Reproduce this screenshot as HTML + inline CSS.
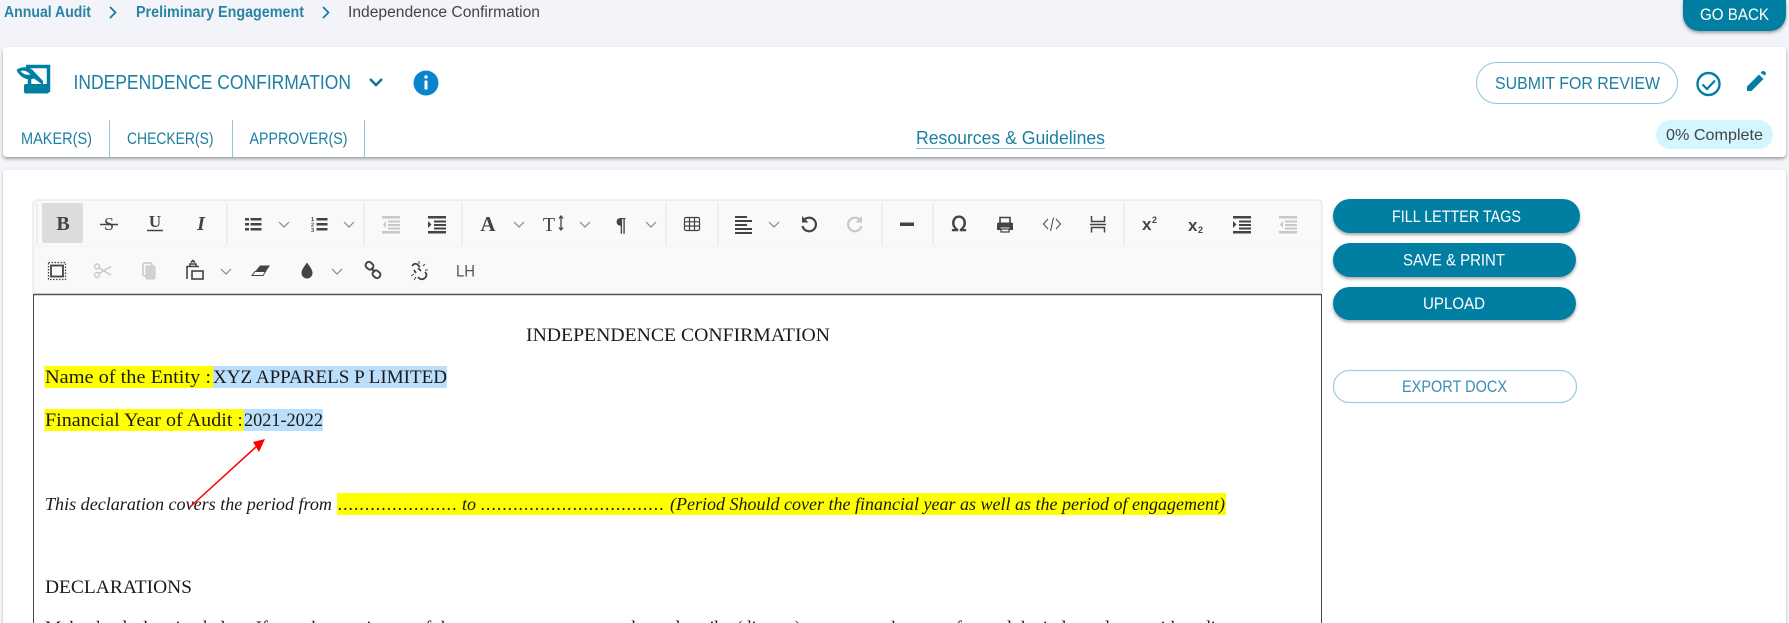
<!DOCTYPE html>
<html lang="en">
<head>
<meta charset="utf-8">
<title>Independence Confirmation</title>
<style>
html,body{margin:0;padding:0;width:1789px;height:623px;overflow:hidden;background:#f3f4f9}
svg{position:absolute;left:0;top:0;display:block}
.os{font-family:"Liberation Sans",sans-serif}
.pf{font-family:"Liberation Serif",serif;fill:#1a1a1a}
.tl{fill:#1c7fa0}
</style>
</head>
<body>
<svg width="1789" height="623" viewBox="0 0 1789 623" xmlns="http://www.w3.org/2000/svg">
<defs>
<filter id="s1" x="-5%" y="-20%" width="110%" height="150%"><feDropShadow dx="0" dy="2" stdDeviation="1.5" flood-color="#000" flood-opacity=".35"/></filter>
<filter id="s2" x="-5%" y="-5%" width="110%" height="110%"><feDropShadow dx="0" dy="1" stdDeviation="1" flood-color="#000" flood-opacity=".3"/></filter>
</defs>
<rect width="1789" height="623" fill="#f3f4f9"/>

<!-- breadcrumb -->
<g class="os" font-size="15.5">
<text x="4" y="17" textLength="87" lengthAdjust="spacingAndGlyphs" fill="#14789a" font-weight="bold" opacity=".9">Annual Audit</text>
<path d="M110 7l5.500 5.500-5.500 5.500" fill="none" stroke="#14789a" stroke-width="1.700"/>
<text x="136" y="17" textLength="168" lengthAdjust="spacingAndGlyphs" fill="#14789a" font-weight="bold" opacity=".9">Preliminary Engagement</text>
<path d="M323 7l5.500 5.500-5.500 5.500" fill="none" stroke="#14789a" stroke-width="1.700"/>
<text x="348" y="17" textLength="192" lengthAdjust="spacingAndGlyphs" fill="#444">Independence Confirmation</text>
</g>

<!-- go back -->
<path d="M1683 0H1786V15a16 16 0 0 1-16 16H1699a16 16 0 0 1-16-16Z" fill="#007fa3" filter="url(#s1)"/>
<text class="os" x="1700" y="20" font-size="17" textLength="69" lengthAdjust="spacingAndGlyphs" fill="#fff">GO BACK</text>

<!-- header card -->
<rect x="3" y="47" width="1783" height="110" rx="4" fill="#fff" filter="url(#s1)"/>
<!-- logo -->
<path d="M26 66.500H48.500V92" fill="none" stroke="#007fa3" stroke-width="3.500"/>
<path d="M16.500 70C22 65.500 31 67 34 71.500L43 81V85L34 78.500C28 81 20 78 16.500 70Z" fill="#007fa3"/>
<path d="M20.500 71C24 70 27 71 30.500 74.500C26 75.500 23 74 20.500 71Z" fill="#fff"/>
<path d="M29.500 78V85" stroke="#007fa3" stroke-width="3.500"/>
<rect x="24" y="84" width="25" height="9.500" rx="2" fill="#007fa3"/>
<text class="os tl" x="73.500" y="89" font-size="20" textLength="277.500" lengthAdjust="spacingAndGlyphs">INDEPENDENCE CONFIRMATION</text>
<path d="M370 79l6 6 6-6" fill="none" stroke="#0f7496" stroke-width="2.400"/>
<circle cx="426" cy="83" r="12.500" fill="#0a84cc"/>
<circle cx="426" cy="77" r="1.700" fill="#fff"/>
<rect x="424.500" y="80.500" width="3" height="9" rx=".6" fill="#fff"/>

<!-- tabs -->
<g class="os tl" font-size="16.500">
<text x="21" y="144" textLength="71" lengthAdjust="spacingAndGlyphs">MAKER(S)</text>
<text x="127" y="144" textLength="86.500" lengthAdjust="spacingAndGlyphs">CHECKER(S)</text>
<text x="249.500" y="144" textLength="98" lengthAdjust="spacingAndGlyphs">APPROVER(S)</text>
</g>
<path d="M109.500 120V157M232.500 120V157M364.500 120V157" stroke="#8ec5d8" stroke-width="1"/>
<text class="os tl" x="916" y="144" font-size="18" textLength="189" lengthAdjust="spacingAndGlyphs">Resources &amp; Guidelines</text>
<path d="M916 148.500H1105" stroke="#8ec5d8" stroke-width="1"/>

<!-- submit etc -->
<rect x="1476.500" y="62.500" width="201" height="41" rx="20.500" fill="#fff" stroke="#8ec5d8"/>
<text class="os tl" x="1495" y="89" font-size="17.500" textLength="165" lengthAdjust="spacingAndGlyphs">SUBMIT FOR REVIEW</text>
<circle cx="1708.500" cy="84" r="11" fill="none" stroke="#007fa3" stroke-width="2.400"/>
<path d="M1702.500 84.500l4.500 4.500 8-8.500" fill="none" stroke="#007fa3" stroke-width="2.200"/>
<path d="M1747 91V86.500L1759 74.500L1763.500 79L1751.500 91ZM1760.500 73L1762.500 71Q1763.500 70.500 1764.500 71.500L1765.500 72.500Q1766.500 73.500 1765.500 74.500L1765 75.500Z" fill="#007fa3"/>
<rect x="1656" y="120" width="117" height="29" rx="14.500" fill="#d4f6ff"/>
<text class="os" x="1666" y="140" font-size="16" textLength="97" lengthAdjust="spacingAndGlyphs" fill="#444">0% Complete</text>

<!-- main card -->
<rect x="3" y="170" width="1783" height="470" rx="4" fill="#fff" filter="url(#s2)"/>

<!-- toolbar -->
<rect x="33" y="200" width="1289" height="94" rx="4" fill="#f9f9f9" stroke="#e3e3e3"/>
<path d="M34 246H1321" stroke="#f3f3f3"/>
<rect x="42" y="203" width="41" height="40" rx="2" fill="#dcdcdc"/>
<path d="M227 203V245M364 203V245M462 203V245M666 203V245M718 203V245M882 203V245M933 203V245M1124 203V245M37 203V245" stroke="#e3e3e3" stroke-width="1"/>

<g font-family="Liberation Serif,serif" fill="#444" text-anchor="middle">
<text x="63" y="230" font-size="20" font-weight="bold">B</text>
<text x="109" y="230" font-size="18">S</text>
<text x="155" y="227" font-size="17" font-weight="bold">U</text>
<text x="201" y="230" font-size="20" font-style="italic" font-weight="bold">I</text>
<text x="488" y="231" font-size="21" font-weight="bold">A</text>
<text x="549" y="231" font-size="20">T</text>
<text x="621" y="231" font-size="20" font-weight="bold">¶</text>
</g>
<path d="M100 224.500H118M147 230.500H163" stroke="#444" stroke-width="1.500"/>
<path d="M561 216V230M559 218.500l2-2.500 2 2.500M559 227.500l2 2.500 2-2.500" fill="none" stroke="#444" stroke-width="1.300"/>

<!-- chevrons -->
<path d="M279 222l5 5 5-5M344 222l5 5 5-5M514 222l5 5 5-5M580 222l5 5 5-5M646 222l5 5 5-5M769 222l5 5 5-5M221 269l5 5 5-5M332 269l5 5 5-5" fill="none" stroke="#888" stroke-width="1.200"/>

<!-- ul -->
<g fill="#444">
<rect x="245" y="218" width="4" height="2.500"/><rect x="245" y="223" width="4" height="2.500"/><rect x="245" y="228" width="4" height="2.500"/>
<rect x="250.500" y="218" width="11" height="2.500"/><rect x="250.500" y="223" width="11" height="2.500"/><rect x="250.500" y="228" width="11" height="2.500"/>
<rect x="316.500" y="218" width="11" height="2.500"/><rect x="316.500" y="223" width="11" height="2.500"/><rect x="316.500" y="228" width="11" height="2.500"/>
<text x="311" y="221" font-size="5.500" font-family="Liberation Sans,sans-serif" font-weight="bold">1</text>
<text x="311" y="226.500" font-size="5.500" font-family="Liberation Sans,sans-serif" font-weight="bold">2</text>
<text x="311" y="232" font-size="5.500" font-family="Liberation Sans,sans-serif" font-weight="bold">3</text>
</g>

<!-- outdent / indent -->
<g fill="#c8c8c8"><rect x="382" y="216" width="18" height="2.500"/><rect x="388" y="220.500" width="12" height="2"/><rect x="388" y="224" width="12" height="2"/><rect x="388" y="227.500" width="12" height="2"/><rect x="382" y="231" width="18" height="2.500"/><path d="M386 221v7l-3-3.500Z"/></g>
<g fill="#444"><rect x="428" y="216" width="18" height="2.500"/><rect x="434" y="220.500" width="12" height="2"/><rect x="434" y="224" width="12" height="2"/><rect x="434" y="227.500" width="12" height="2"/><rect x="428" y="231" width="18" height="2.500"/><path d="M428 221v7l3.500-3.500Z"/></g>
<g fill="#444"><rect x="1233" y="216" width="18" height="2.500"/><rect x="1239" y="220.500" width="12" height="2"/><rect x="1239" y="224" width="12" height="2"/><rect x="1239" y="227.500" width="12" height="2"/><rect x="1233" y="231" width="18" height="2.500"/><path d="M1233 221v7l3.500-3.500Z"/></g>
<g fill="#c8c8c8"><rect x="1279" y="216" width="18" height="2.500"/><rect x="1285" y="220.500" width="12" height="2"/><rect x="1285" y="224" width="12" height="2"/><rect x="1285" y="227.500" width="12" height="2"/><rect x="1279" y="231" width="18" height="2.500"/><path d="M1283 221v7l-3-3.500Z"/></g>

<!-- table -->
<g fill="none" stroke="#444" stroke-width="1.200"><rect x="684.500" y="217.500" width="15" height="13" rx="1.500"/><path d="M684.500 221.800H699.500M684.500 226H699.500M689.500 218V230M694.500 218V230"/></g>
<!-- align -->
<g fill="#444"><rect x="735" y="216" width="12" height="2"/><rect x="735" y="220" width="17" height="2"/><rect x="735" y="224" width="12" height="2"/><rect x="735" y="228" width="17" height="2"/><rect x="735" y="232" width="17" height="2"/></g>
<!-- undo/redo -->
<path d="M804.500 219.500A6.800 6.800 0 1 1 802.500 226" fill="none" stroke="#444" stroke-width="2.200"/>
<path d="M802 216v6.500h6.500Z" fill="#444"/>
<path d="M859.500 219.500A6.800 6.800 0 1 0 861.500 226" fill="none" stroke="#c8c8c8" stroke-width="2.200"/>
<path d="M862 216v6.500h-6.500Z" fill="#c8c8c8"/>
<!-- hr -->
<rect x="900" y="222.500" width="14" height="3.500" fill="#444"/>
<!-- omega -->
<text x="959" y="231" font-size="20" font-weight="normal" text-anchor="middle" font-family="DejaVu Sans,sans-serif" fill="#444" stroke="#444" stroke-width=".5">Ω</text>
<!-- print -->
<path d="M1000 223V217.500H1010V223" fill="none" stroke="#444" stroke-width="1.600"/>
<path d="M997 224Q997 222.500 999 222.500H1011Q1013 222.500 1013 224V230H1009.500V227.500H1000.500V230H997Z" fill="#444"/>
<path d="M1001 229H1009V232H1001Z" fill="none" stroke="#444" stroke-width="1.300"/>
<!-- code -->
<path d="M1048 219l-4.500 5 4.500 5M1056 219l4.500 5-4.500 5M1053.500 217.500L1050.500 231" fill="none" stroke="#444" stroke-width="1"/>
<!-- page break -->
<path d="M1091.500 216V221.500H1104.500V216M1091.500 232.500V227.500H1104.500V232.500M1090 224.500H1106" fill="none" stroke="#444" stroke-width="1.500"/>
<!-- sup sub -->
<g fill="#444" font-family="Liberation Sans,sans-serif" font-weight="bold">
<text x="1142" y="230" font-size="17">x</text><text x="1152" y="223" font-size="9">2</text>
<text x="1188" y="231" font-size="17">x</text><text x="1198" y="233" font-size="9">2</text>
</g>

<!-- row 2 -->
<rect x="51" y="265.500" width="12" height="11" fill="none" stroke="#444" stroke-width="1.800"/>
<rect x="48.500" y="262.500" width="17" height="17" fill="none" stroke="#444" stroke-width="1.300" stroke-dasharray="1.500 1.500"/>
<g fill="none" stroke="#c8c8c8" stroke-width="1.400"><circle cx="97" cy="266.500" r="2.500"/><circle cx="97" cy="275" r="2.500"/><path d="M99 268L111 275M99 273.500L111 266.500"/></g>
<g fill="none" stroke="#c8c8c8" stroke-width="1.500"><rect x="143" y="263" width="9" height="13" rx="1.500"/></g>
<rect x="146" y="266" width="9" height="13" rx="1.500" fill="#d2d2d2" stroke="#c8c8c8"/>
<g fill="none" stroke="#444" stroke-width="1.600"><path d="M187 279V266.500H199M190 266.500V264H196V266.500"/><rect x="192" y="271" width="11" height="8"/><path d="M191 262.500L193 260.500L195 262.500"/></g>
<path d="M252 275.500L260 265.500H270L263 275.500Z" fill="#444"/>
<path d="M252 275.500L255 271.500H265.500L263 275.500Z" fill="#f9f9f9" stroke="#444"/>
<path d="M307 262.500C310 267 312.500 269.500 312.500 273A5.300 5.300 0 0 1 301.500 273C301.500 269.500 304 267 307 262.500Z" fill="#444"/>
<g fill="none" stroke="#444" stroke-width="2"><rect x="365.500" y="262.500" width="8" height="6.500" rx="3" transform="rotate(40 369.500 265.700)"/><rect x="372.500" y="271" width="8" height="6.500" rx="3" transform="rotate(40 376.500 274.200)"/><path d="M371 268L375 272"/></g>
<g fill="none" stroke="#444" stroke-width="1.800"><path d="M412 266Q415 262 418 265L420 267M425 272Q428 275 425 278Q421 281 418 277M414 270L416 273M418 268L421 271"/></g>
<path d="M419 261V264M425 264L423 266M428 270H425M411 276L414 274M414 280L416 277" stroke="#444" stroke-width="1" fill="none"/>
<text class="os" x="456" y="276.500" font-size="17" fill="#555" textLength="19" lengthAdjust="spacingAndGlyphs">LH</text>

<!-- editor -->
<rect x="33.500" y="294.500" width="1288" height="340" fill="#fff" stroke="#444" stroke-width="1"/>
<path d="M33.500 294.500H1321.500" stroke="#555" stroke-width="1.500"/>

<!-- highlights -->
<rect x="44.500" y="366" width="168.500" height="22" fill="#ffff00"/>
<rect x="213" y="366" width="234" height="22" fill="#bbdefb"/>
<rect x="44.500" y="409" width="199" height="22" fill="#ffff00"/>
<rect x="243.500" y="409" width="79.500" height="22" fill="#bbdefb"/>
<rect x="337" y="493" width="889" height="22" fill="#ffff00"/>

<!-- doc text -->
<g class="pf" font-size="18.500">
<text x="526" y="341" textLength="304" lengthAdjust="spacingAndGlyphs">INDEPENDENCE CONFIRMATION</text>
<text x="45" y="383" textLength="166" lengthAdjust="spacingAndGlyphs">Name of the Entity :</text>
<text x="213" y="383" textLength="234" lengthAdjust="spacingAndGlyphs">XYZ APPARELS P LIMITED</text>
<text x="45" y="426" textLength="198" lengthAdjust="spacingAndGlyphs">Financial Year of Audit :</text>
<text x="244" y="426" textLength="79" lengthAdjust="spacingAndGlyphs">2021-2022</text>
<text x="45" y="510" font-style="italic" font-size="18" textLength="287" lengthAdjust="spacingAndGlyphs">This declaration covers the period from</text>
<text x="338" y="510" font-style="italic" font-size="18" textLength="119" lengthAdjust="spacing">...................... </text>
<text x="462" y="510" font-style="italic" font-size="18" textLength="14" lengthAdjust="spacingAndGlyphs">to</text>
<text x="481" y="510" font-style="italic" font-size="18" textLength="183" lengthAdjust="spacing">..................................</text>
<text x="670" y="510" font-style="italic" font-size="18" textLength="555" lengthAdjust="spacingAndGlyphs">(Period Should cover the financial year as well as the period of engagement)</text>
<text x="45" y="593" textLength="147" lengthAdjust="spacingAndGlyphs">DECLARATIONS</text>
<text x="45" y="634" font-size="19" textLength="1232" lengthAdjust="spacingAndGlyphs">Make the declaration below. If any changes in any of the engagement team members, describe (discuss) measures taken to safeguard the independence with audit partner</text>
</g>

<!-- arrow -->
<path d="M190 507L257 446" stroke="#f00" stroke-width="1.500" fill="none"/>
<path d="M265 439L253 442L259 452Z" fill="#f00"/>

<!-- right buttons -->
<g filter="url(#s1)">
<rect x="1333" y="199" width="247" height="34" rx="17" fill="#007fa3"/>
<rect x="1333" y="243" width="243" height="34" rx="17" fill="#007fa3"/>
<rect x="1333" y="287" width="243" height="33" rx="16.500" fill="#007fa3"/>
</g>
<g class="os" fill="#fff" font-size="16.500">
<text x="1392" y="222" textLength="129" lengthAdjust="spacingAndGlyphs">FILL LETTER TAGS</text>
<text x="1403" y="265.500" textLength="102" lengthAdjust="spacingAndGlyphs">SAVE &amp; PRINT</text>
<text x="1423" y="309" textLength="62" lengthAdjust="spacingAndGlyphs">UPLOAD</text>
</g>
<rect x="1333.500" y="370.500" width="243" height="32" rx="16" fill="#fff" stroke="#9fcfe0" stroke-width="1.300"/>
<text class="os" x="1402" y="392" font-size="16.500" textLength="105" lengthAdjust="spacingAndGlyphs" fill="#3a8fb0">EXPORT DOCX</text>
</svg>
</body>
</html>
